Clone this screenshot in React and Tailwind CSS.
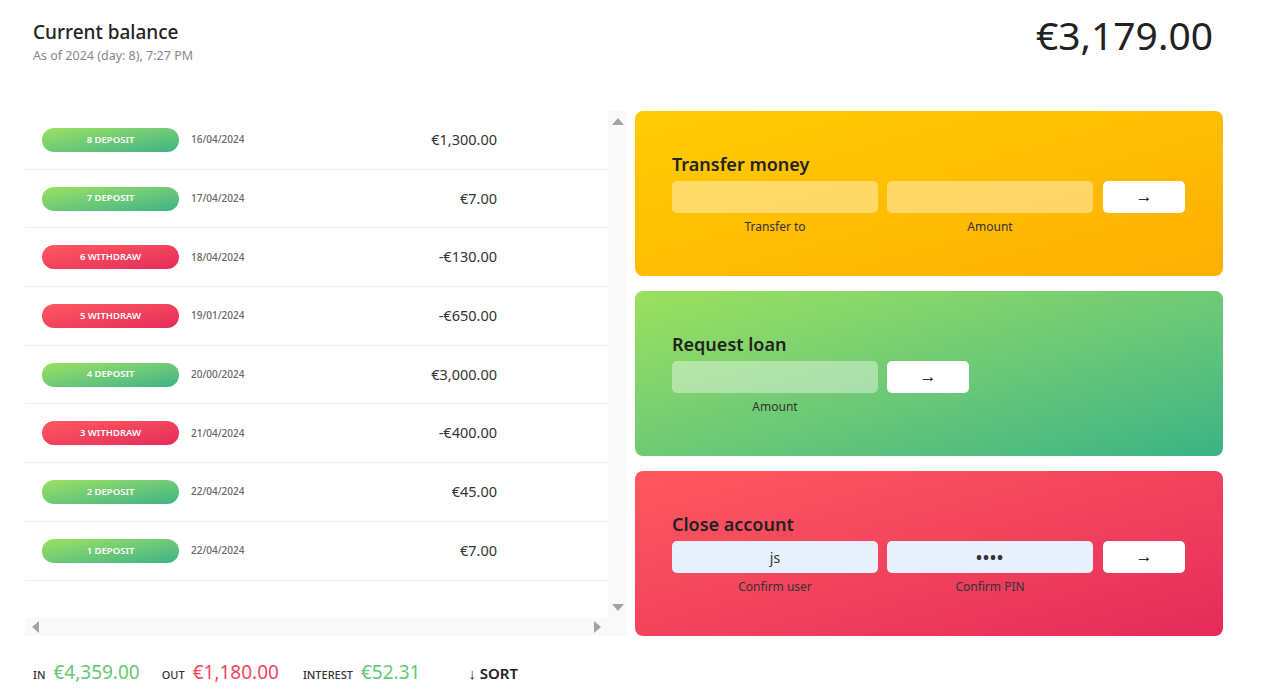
import React from "react";

const movements = [
  { n: 8, type: "deposit", date: "16/04/2024", v: "€1,300.00" },
  { n: 7, type: "deposit", date: "17/04/2024", v: "€7.00" },
  { n: 6, type: "withdraw", date: "18/04/2024", v: "-€130.00" },
  { n: 5, type: "withdraw", date: "19/01/2024", v: "-€650.00" },
  { n: 4, type: "deposit", date: "20/00/2024", v: "€3,000.00" },
  { n: 3, type: "withdraw", date: "21/04/2024", v: "-€400.00" },
  { n: 2, type: "deposit", date: "22/04/2024", v: "€45.00" },
  { n: 1, type: "deposit", date: "22/04/2024", v: "€7.00" },
];

function Row({ m }) {
  const dep = m.type === "deposit";
  return (
    <div className="flex items-center h-[58.7px] border-b border-[#eeeeee] pl-[17px] pr-[111px]">
      <div
        className={
          "w-[137px] h-[24px] rounded-full flex items-center justify-center text-[9.5px] font-semibold text-white uppercase bg-linear-to-tl " +
          (dep ? "from-[#39b385] to-[#9be15d]" : "from-[#e52a5a] to-[#ff585f]")
        }
      >
        {m.n} {dep ? "DEPOSIT" : "WITHDRAW"}
      </div>
      <div className="ml-[12px] text-[10px] text-[#666] font-medium">{m.date}</div>
      <div className="ml-auto text-[14.5px] text-[#333]">{m.v}</div>
    </div>
  );
}

function Input({ w, bg, children }) {
  return (
    <div className={"h-[32px] rounded-[5px] flex items-center justify-center text-[14px] text-[#333] " + w + " " + bg}>
      {children}
    </div>
  );
}

function Btn() {
  return (
    <div
      className="h-[32px] w-[82px] rounded-[5px] bg-white flex items-center justify-center text-[17px] text-black"
      style={{ fontFamily: '"Liberation Sans", sans-serif' }}
    >
      →
    </div>
  );
}

function Card({ grad, title, children }) {
  return (
    <div className={"h-[165px] rounded-[8px] bg-linear-to-tl pl-[37px] pt-[42px] " + grad}>
      <div className="text-[18px] font-semibold text-[#222] leading-[22px] mb-[6px]">{title}</div>
      {children}
    </div>
  );
}

function Label({ w, children }) {
  return <div className={"text-[12px] text-[#333] text-center " + w}>{children}</div>;
}

export default function App() {
  return (
    <div className="w-[1265px] h-[700px] bg-white overflow-hidden" style={{ fontFamily: '"Noto Sans", "Open Sans", sans-serif' }}>
      <div className="flex items-start justify-between pl-[33px] pr-[52px] pt-[18px] h-[111px]">
        <div>
          <div className="text-[19px] font-medium text-[#222] leading-[28px]">Current balance</div>
          <div className="text-[12.5px] text-[#888] leading-[18px] mt-[1px]">As of 2024 (day: 8), 7:27 PM</div>
        </div>
        <div className="text-[39px] text-[#222] leading-[40px] mt-[-3px]">€3,179.00</div>
      </div>

      <div className="flex pl-[25px] gap-[8px]">
        <div className="w-[602px] h-[525px] flex flex-col bg-white">
          <div className="flex h-[507px]">
            <div className="flex-1">
              {movements.map((m, i) => (
                <Row key={i} m={m} />
              ))}
            </div>
            <div className="w-[19px] bg-[#f9f9f9] flex flex-col items-center justify-between py-[7px]">
              <div className="w-0 h-0 border-l-[6px] border-r-[6px] border-b-[7px] border-l-transparent border-r-transparent border-b-[#a3a3a3]" />
              <div className="w-0 h-0 border-l-[6px] border-r-[6px] border-t-[7px] border-l-transparent border-r-transparent border-t-[#a3a3a3]" />
            </div>
          </div>
          <div className="h-[18px] bg-[#f9f9f9] flex items-center justify-between pl-[7px] pr-[26px]">
            <div className="w-0 h-0 border-t-[6px] border-b-[6px] border-r-[7px] border-t-transparent border-b-transparent border-r-[#a3a3a3]" />
            <div className="w-0 h-0 border-t-[6px] border-b-[6px] border-l-[7px] border-t-transparent border-b-transparent border-l-[#a3a3a3]" />
          </div>
        </div>

        <div className="w-[588px] flex flex-col gap-[15px]">
          <Card grad="from-[#ffb003] to-[#ffcb03]" title="Transfer money">
            <div className="flex gap-[9px]">
              <Input w="w-[206px]" bg="bg-white/40" />
              <Input w="w-[206px]" bg="bg-white/40" />
              <div className="ml-[1px]"><Btn /></div>
            </div>
            <div className="flex gap-[9px] mt-[5px]">
              <Label w="w-[206px]">Transfer to</Label>
              <Label w="w-[206px]">Amount</Label>
            </div>
          </Card>
          <Card grad="from-[#39b385] to-[#9be15d]" title="Request loan">
            <div className="flex gap-[9px]">
              <Input w="w-[206px]" bg="bg-white/40" />
              <Btn />
            </div>
            <div className="flex gap-[9px] mt-[5px]">
              <Label w="w-[206px]">Amount</Label>
            </div>
          </Card>
          <Card grad="from-[#e52a5a] to-[#ff585f]" title="Close account">
            <div className="flex gap-[9px]">
              <Input w="w-[206px]" bg="bg-[#e8f0fe]">js</Input>
              <Input w="w-[206px]" bg="bg-[#e8f0fe]"><span className="text-[16px] tracking-[1px] font-bold">••••</span></Input>
              <div className="ml-[1px]"><Btn /></div>
            </div>
            <div className="flex gap-[9px] mt-[5px]">
              <Label w="w-[206px]">Confirm user</Label>
              <Label w="w-[206px]">Confirm PIN</Label>
            </div>
          </Card>
        </div>
      </div>

      <div className="flex items-baseline pl-[33px] mt-[22px]">
        <span className="text-[11px] text-[#333] font-medium mr-[8px]">IN</span>
        <span className="text-[19px] text-[#66c873]">€4,359.00</span>
        <span className="text-[11px] text-[#333] font-medium ml-[22px] mr-[8px]">OUT</span>
        <span className="text-[19px] text-[#f5465d]">€1,180.00</span>
        <span className="text-[11px] text-[#333] font-medium ml-[24px] mr-[8px]">INTEREST</span>
        <span className="text-[19px] text-[#66c873]">€52.31</span>
        <span className="text-[15px] text-[#222] font-semibold ml-[48px]">↓ SORT</span>
      </div>
    </div>
  );
}
